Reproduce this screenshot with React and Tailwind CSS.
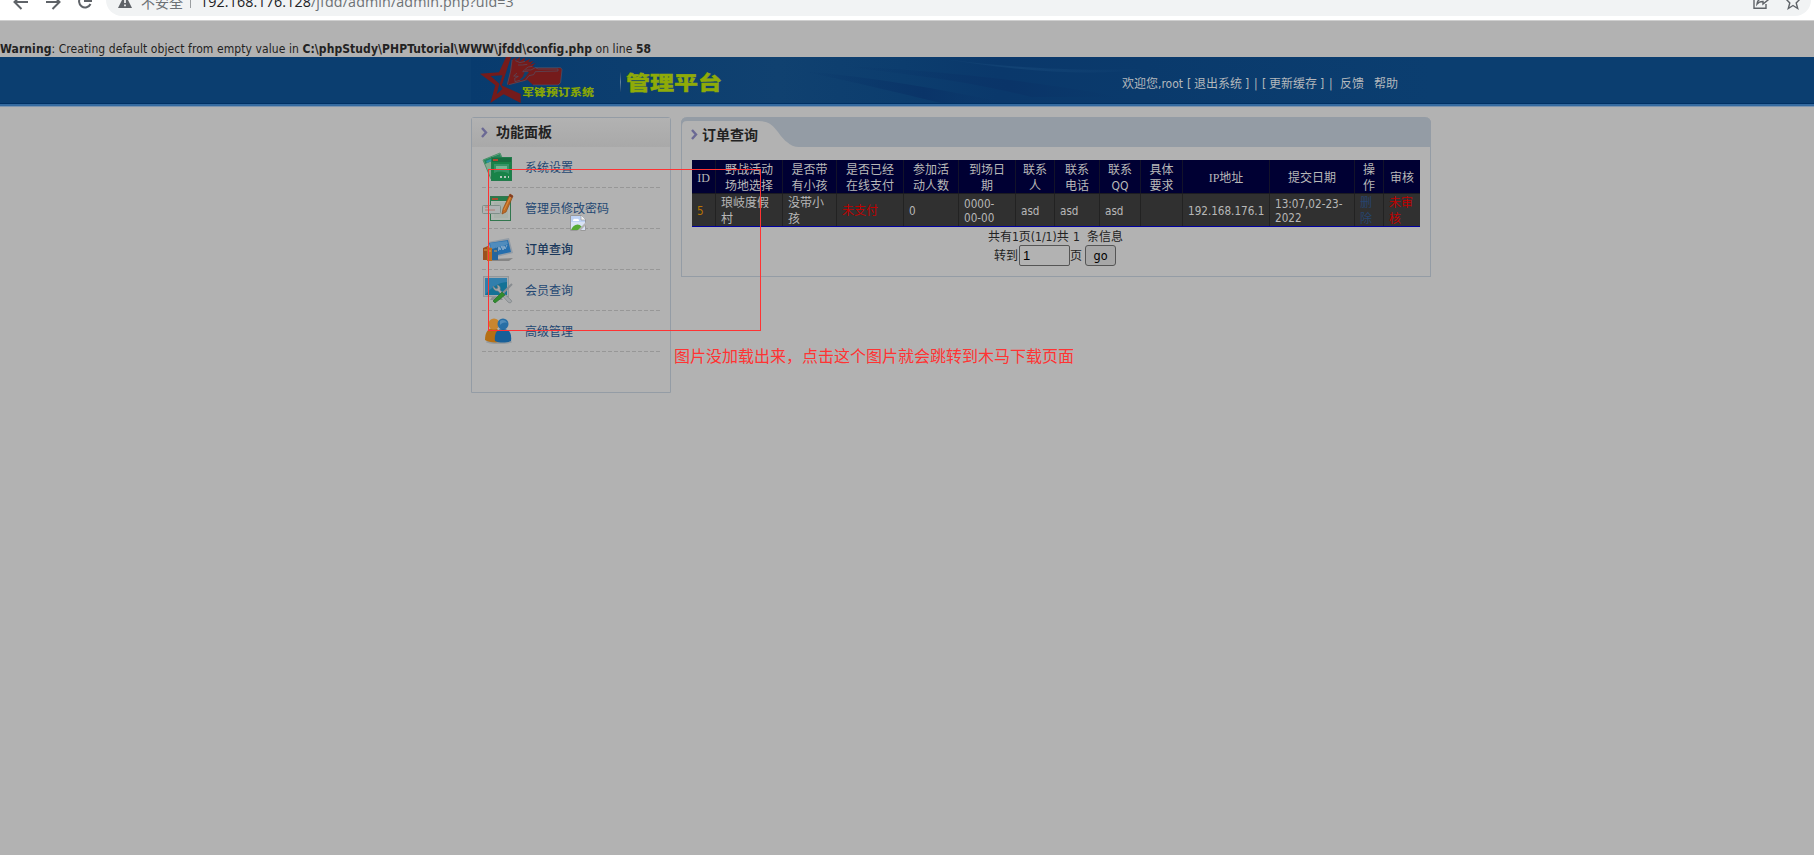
import React from "react";

const UI = "font-['DejaVu_Sans_Condensed','DejaVu_Sans','Noto_Sans_CJK_SC',sans-serif] font-stretch-condensed";
const CJK = "font-['Noto_Sans_CJK_SC',sans-serif]";

function BrowserBar() {
  return (
    <div className="h-[21px] bg-white border-b border-[#cfcfcf] flex items-start overflow-hidden">
      <svg className="block shrink-0" width="106" height="20" viewBox="0 0 106 20" fill="none" stroke="#5f6368" strokeWidth="2">
        <path d="M28 2H15M21.5 -5L14.5 2L21.5 9M46 2H59M52.500 -5L59.500 2L52.500 9" />
        <path d="M90 -2A6 6 0 1 0 90.500 4M84 1H91V-6" />
      </svg>
      <div className="w-[1705px] h-4 bg-[#f1f3f4] rounded-b-[16px] flex items-start">
        <svg className="block shrink-0 ml-[12px]" width="14" height="9" viewBox="0 0 14 9">
          <path d="M7 -6L14 8H0Z" fill="#5f6368" />
          <path d="M6.200 0h1.600v3h-1.600zM6.200 4.500h1.600v1.700h-1.600z" fill="#fff" />
        </svg>
        <div className={`${CJK} ml-[9px] -mt-2 w-[42px] h-5 text-[14px] leading-5 whitespace-nowrap text-[#6d7175]`}>不安全</div>
        <div className="ml-[7px] w-px h-2 bg-[#9b9ea1]" />
        <div className="ml-[9px] -mt-2 h-5 flex-1 font-['Open_Sans',sans-serif] text-[14.3px] leading-5 tracking-[0.11px] whitespace-nowrap text-[#6d7175]">
          <span className="text-[#202124]">192.168.176.128</span>/jfdd/admin/admin.php?uid=3
        </div>
        <svg className="block shrink-0 mr-[10px]" width="48" height="12" viewBox="0 0 48 12" fill="none" stroke="#5f6368" strokeWidth="1.4">
          <path d="M4 -4H1V8.300H13V4M4 4C4.500 0 7 -1.500 10 -1.500V-4L15 0L10 4V1.500C7 1.500 5.500 2 4 4Z" />
          <path d="M40 -6L42 -1H47L43.200 3L44.700 8.500L40 5.500L35.300 8.500L36.800 3L33 -1H38Z" />
        </svg>
      </div>
    </div>
  );
}

function Logo() {
  return (
    <div className="relative w-[130px] h-[47px] shrink-0">
      <svg className="block" width="130" height="47" viewBox="0 6 390 141">
        <path fill="#751b1b" fillRule="evenodd" d="M93 6H108L83 84L80 91L137 117V144L86 118L46 144L61 91L15 56L72 52ZM82 61L47 63L73 86L65 118L82 102L74 88Z" />
        <path fill="#751b1b" d="M111 15L122 6L121 17L135 6L134 19L150 7L147 20L166 11L160 22L176 18L165 29L182 24L172 34L181 38H258L261 44L256 86L249 90H174L158 75L102 90L96 87L105 50Z" />
        <path fill="none" stroke="#496179" strokeWidth="1.6" strokeLinejoin="round" d="M97 89L107 48L111 15M121 17L135 23L150 19M129 30L143 30L157 28M102 89L151 76L162 62L176 59L181 50L249 48V42H190L181 38L168 45H148L143 50H158L146 66L134 76L120 80L119 70L130 64L116 63L126 54M172 34L160 36L151 42M174 90H249L257 82L261 44L257 38H181" />
        <path fill="#12406b" d="M149 51H162L151 67L141 76L134 74L143 65Z" />
      </svg>
      <div className={`${CJK} absolute left-[47px] top-[29px] flex h-3 items-center origin-center scale-y-[.86] text-[12px] leading-3 font-black whitespace-nowrap text-[#86a506]`}>军锋预订系统</div>
    </div>
  );
}

function Header() {
  return (
    <div className="relative h-[50px] bg-[#0b3e70] flex flex-col">
      <svg className="absolute left-[471px] top-0" width="960" height="46" viewBox="0 0 960 46" preserveAspectRatio="none">
        <defs>
          <linearGradient id="base">
            <stop offset="0" stopColor="#083b6e" />
            <stop offset=".32" stopColor="#104170" />
            <stop offset=".45" stopColor="#0c3d6e" />
            <stop offset=".55" stopColor="#0a386b" />
            <stop offset=".7" stopColor="#0a3a6c" />
            <stop offset="1" stopColor="#0b3e70" />
          </linearGradient>
          <linearGradient id="beam">
            <stop offset="0" stopColor="#0a3669" stopOpacity="0" />
            <stop offset=".6" stopColor="#0a3468" />
            <stop offset="1" stopColor="#0a3669" stopOpacity="0" />
          </linearGradient>
          <linearGradient id="light">
            <stop offset="0" stopColor="#1c5080" stopOpacity="0" />
            <stop offset=".4" stopColor="#17497a" stopOpacity=".6" />
            <stop offset="1" stopColor="#17497a" stopOpacity="0" />
          </linearGradient>
        </defs>
        <rect width="960" height="46" fill="url(#base)" />
        <path d="M330 14C400 20 470 32 535 46H470C420 34 370 22 330 14Z" fill="url(#beam)" />
        <path d="M370 9C440 12 540 20 650 40H560C490 22 430 17 370 9Z" fill="url(#beam)" />
        <path d="M460 0C520 9 590 15 680 12C610 20 540 13 460 0Z" fill="url(#light)" />
      </svg>
      <div className="relative h-[46px] flex items-start pl-[475px]">
        <Logo />
        <div className="mt-[15px] ml-[15px] w-px h-5 bg-linear-to-b from-[#12406b] via-[#6483a0] to-[#12406b]" />
        <div className={`${CJK} mt-[13px] ml-[5px] w-[96px] h-[24px] text-[24px] leading-[24px] font-black whitespace-nowrap text-[#8fab08] scale-y-[.8] [-webkit-text-stroke:0.5px_#8fab08]`}>管理平台</div>
        <nav className={`${UI} ml-[400px] mt-[18px] h-[18px] flex items-center text-[12px] leading-[18px] whitespace-nowrap text-[#b4b8bc]`}>
          <span className="w-[65px]">欢迎您,root</span>
          <span className="w-[7px]">[</span>
          <span className="w-[51px]">退出系统</span>
          <span className="w-[9px]">]</span>
          <span className="w-[8px]">|</span>
          <span className="w-[7px]">[</span>
          <span className="w-[51px]">更新缓存</span>
          <span className="w-[9px]">]</span>
          <span className="w-[11px]">|</span>
          <span className="w-[34px]">反馈</span>
          <span>帮助</span>
        </nav>
      </div>
      <div className="relative h-px bg-[#003063]" />
      <div className="relative h-[2px] bg-[#356a9f]" />
      <div className="relative h-px bg-[#7d95b0]" />
    </div>
  );
}

function SettingsIcon() {
  return (
    <svg width="32" height="32" viewBox="0 0 32 32">
      <path d="M1 8L18 1L26 19L9 27Z" fill="#85ab91" stroke="#4f916b" />
      <path d="M2 8L18 2L19 5L3 12Z" fill="#23885a" />
      <path d="M4 9l5-2 1 2-5 2z" fill="#2c91a4" />
      <rect x="9.500" y="5.500" width="20" height="23" fill="#188348" stroke="#237b4c" />
      <rect x="10" y="6" width="19" height="4" fill="#176d40" />
      <rect x="11" y="7" width="5" height="2" fill="#ad4b31" />
      <path d="M12 12H27V22C22 19 17 19 12 21Z" fill="#369467" />
      <rect x="14" y="14" width="11" height="3" fill="#77b692" />
      <path d="M18 24h2v2h-2zM22 24h2v2h-2zM26 24h1v2h-1z" fill="#b5c7bb" />
    </svg>
  );
}

function PasswordIcon() {
  return (
    <svg width="32" height="32" viewBox="0 0 32 32">
      <rect x="8.500" y="3.500" width="20" height="24" fill="#b0b7b1" stroke="#32764e" />
      <rect x="9" y="4" width="19" height="4" fill="#267c4b" />
      <rect x="10" y="5" width="6" height="2" fill="#a54e33" />
      <path d="M12 9h14v16H12z" fill="#a9b2aa" />
      <rect x=".5" y="12.500" width="18" height="8" rx="1" fill="#afb3b3" stroke="#7f8f89" />
      <path d="M3 14h4M3 17h10" stroke="#b17a71" />
      <path d="M28 1L31 3L24 19L20 21L21 16Z" fill="#be6c25" stroke="#914b18" strokeWidth=".7" />
      <path d="M29 3L22 17" stroke="#e08e3d" />
      <path d="M28 1l3 2-1 2-3-2z" fill="#803d25" />
    </svg>
  );
}

function OrderIcon() {
  return (
    <svg width="32" height="32" viewBox="0 0 32 32">
      <path d="M10 25L31 24L27 27H10Z" fill="#858585" />
      <path d="M6 8L27 4L31 19L10 24Z" fill="#929ca6" />
      <path d="M7 9L26 6L29 18L11 22Z" fill="#256ead" />
      <path d="M8 9L25 7L26 10C19 14 15 12 9 16Z" fill="#508cbd" />
      <path d="M12 14l1 3 2-4 1 4 1-4 1 3 2-4 1 4 1-4 1 3 2-4" fill="none" stroke="#9eb9cf" strokeWidth=".8" />
      <path d="M1 14L6 12V26H1Z" fill="#9b511d" />
      <path d="M5 13L10 14V27H5Z" fill="#ba7021" />
      <path d="M10 15L16 13V26H10Z" fill="#24659c" />
      <path d="M2 16h3M6 17h3M12 17h3" stroke="#d69c4e" />
    </svg>
  );
}

function MemberIcon() {
  return (
    <svg width="32" height="32" viewBox="0 0 32 32">
      <rect x="1.500" y="1.500" width="25" height="20" fill="#a4a9ac" stroke="#92979a" />
      <rect x="3" y="3" width="22" height="17" fill="#147296" />
      <path d="M3 3H25V7C15 8 10 12 3 20Z" fill="#317fac" />
      <path d="M10 22h9l2 3H8z" fill="#8b8f90" />
      <path d="M11 11C11 14 13 16 16 16L26 27C28 29 31 27 29 25L18 15C19 12 17 10 15 10L16 13L14 14Z" fill="#a2a6a9" stroke="#747a7d" strokeWidth=".6" />
      <path d="M30 9L19 20" stroke="#888c90" strokeWidth="2" />
      <path d="M20 17L23 20L13 28L11 26Z" fill="#318c2c" stroke="#24712d" strokeWidth=".7" />
    </svg>
  );
}

function ManageIcon() {
  return (
    <svg width="32" height="32" viewBox="0 0 32 32">
      <ellipse cx="17" cy="26" rx="13" ry="2" fill="#969ca0" />
      <path d="M3 24C3 16 6 12 12 12C17 12 18 17 18 26C12 27 6 26 3 24Z" fill="#b56f14" />
      <circle cx="12" cy="8" r="5.500" fill="#c9862f" />
      <path d="M13 25C12 17 15 13 21 13C27 13 30 17 29 25C25 27 17 27 13 25Z" fill="#175f98" />
      <circle cx="21" cy="8" r="5.500" fill="#276fa6" />
      <path d="M18 5C20 3 24 4 25 7C22 6 20 7 18 9Z" fill="#508cba" />
    </svg>
  );
}

const MENU = [
  { label: "系统设置", Icon: SettingsIcon },
  { label: "管理员修改密码", Icon: PasswordIcon },
  { label: "订单查询", Icon: OrderIcon, active: true },
  { label: "会员查询", Icon: MemberIcon },
  { label: "高级管理", Icon: ManageIcon },
];

function Chevron() {
  return (
    <svg className="block shrink-0" width="7" height="11" viewBox="0 0 7 11">
      <path d="M1 1L5 5.500L1 10" fill="none" stroke="#6b6994" strokeWidth="2.4" />
    </svg>
  );
}

function Sidebar() {
  return (
    <aside className="w-[200px] h-[276px] shrink-0 border border-[#949ca5] rounded-t-[3px]">
      <div className="h-[29px] pl-[9px] flex items-center bg-linear-to-b from-[#b2b2b2] to-[#a9a9a9]">
        <Chevron />
        <h2 className={`${CJK} ml-[8px] pb-[3px] text-[14px] leading-5 font-bold text-[#222]`}>功能面板</h2>
      </div>
      <ul className="px-[10px]">
        {MENU.map(({ label, Icon, active }) => (
          <li key={label} className="relative h-[41px] flex items-center">
            <Icon />
            <span className={`${CJK} ml-[11px] pb-px text-[12px] leading-4 ${active ? "font-medium text-[#19385b]" : "text-[#244873]"}`}>{label}</span>
            <svg className="absolute left-0 bottom-0" width="178" height="1">
              <path d="M0 .5H178" stroke="#979797" strokeDasharray="4 2" />
            </svg>
          </li>
        ))}
      </ul>
    </aside>
  );
}

function Red({ children }) {
  return <span className="text-[#c00000]">{children}</span>;
}

const COLUMNS = [
  { w: "w-[24px]", head: ["ID"], body: [<span className="text-[#b87300]">5</span>] },
  { w: "w-[67px]", head: ["野战活动", "场地选择"], body: ["琅岐度假", "村"], cjk: true },
  { w: "w-[54px]", head: ["是否带", "有小孩"], body: ["没带小", "孩"], cjk: true },
  { w: "w-[67px]", head: ["是否已经", "在线支付"], body: [<Red>未支付</Red>], cjk: true },
  { w: "w-[55px]", head: ["参加活", "动人数"], body: ["0"] },
  { w: "w-[57px]", head: ["到场日", "期"], body: ["0000-", "00-00"] },
  { w: "w-[39px]", head: ["联系", "人"], body: ["asd"] },
  { w: "w-[45px]", head: ["联系", "电话"], body: ["asd"] },
  { w: "w-[41px]", head: ["联系", "QQ"], body: ["asd"] },
  { w: "w-[42px]", head: ["具体", "要求"], body: [""] },
  { w: "w-[87px]", head: ["IP地址"], body: ["192.168.176.1"] },
  { w: "w-[85px]", head: ["提交日期"], body: ["13:07,02-23-", "2022"] },
  { w: "w-[29px]", head: ["操", "作"], body: [<span className="text-[#27446e]">删</span>, <span className="text-[#27446e]">除</span>], cjk: true },
  { w: "w-[36px]", head: ["审核"], body: [<Red>未审</Red>, <Red>核</Red>], cjk: true },
];

function OrderTable() {
  return (
    <div className="w-[728px] h-[67px] flex flex-col">
      <div className="h-[34px] flex bg-[#000033] border-b border-[#1c1c22]">
        {COLUMNS.map((c, i) => (
          <div key={i} className={`${c.w} shrink-0 pt-[2px] flex flex-col items-center justify-center border-r border-[#13132a] last:border-r-0 font-['Liberation_Serif','Noto_Sans_CJK_SC',sans-serif] text-[12px] leading-4 whitespace-nowrap text-[#b8b8b8]`}>
            {c.head.map((t, j) => (
              <span key={j} className={`block h-4 ${t === "QQ" ? "font-['DejaVu_Sans_Condensed']" : ""}`}>{t}</span>
            ))}
          </div>
        ))}
      </div>
      <div className="h-[33px] flex bg-[#303030] border-b border-[#0000a0]">
        {COLUMNS.map((c, i) => (
          <div key={i} className={`${c.w} ${UI} shrink-0 flex flex-col justify-center border-r border-[#222] last:border-r-0 whitespace-nowrap text-[#b8b8b8] ${c.cjk ? "pl-[5px] pt-px text-[12px] leading-4" : "pl-[5px] pt-[2px] text-[11.6px] leading-[14px]"}`}>
            {c.body.map((t, j) => (
              <span key={j} className="block">{t}</span>
            ))}
          </div>
        ))}
      </div>
    </div>
  );
}

function Pager() {
  return (
    <div className={`${UI} w-[728px] text-[12px] text-[#222]`}>
      <div className="pl-[296px] pt-px h-[18px] leading-[18px] whitespace-nowrap flex">
        <span className="w-[85px]">共有1页(1/1)共</span>
        <span className="w-[14px]">1</span>
        <span>条信息</span>
      </div>
      <div className="pl-[302px] h-[21px] flex items-center">
        <span className="w-[25px]">转到</span>
        <input readOnly value="1" className="w-[51px] h-[21px] border border-[#555] rounded-[2px] pl-[3px] text-[13px] bg-[#b2b2b2] text-black outline-none font-['Liberation_Sans',sans-serif]" />
        <span className="w-[15px]">页</span>
        <button className="w-[31px] h-[21px] border border-[#555] rounded-[3px] bg-[#a7a7a7] text-[12.5px] leading-[17px] text-black">go</button>
      </div>
    </div>
  );
}

function MainPanel() {
  return (
    <main className="ml-[10px] w-[750px] h-[160px] shrink-0 flex flex-col border border-t-0 border-[#949ca5] rounded-t-[6px]">
      <div className="-mx-px relative h-[30px] rounded-t-[6px] bg-[#949ca5]">
        <svg className="absolute left-0 top-0" width="750" height="30">
          <path d="M1 30V9Q1 4 6 4H78C94 4 96 17 106 25Q111 30 118 30H749V33H1Z" fill="#b2b2b2" />
        </svg>
        <div className="relative h-[30px] pl-[10px] pt-[5px] flex items-center">
          <Chevron />
          <h2 className={`${CJK} ml-[4px] pb-[2px] text-[14px] leading-5 font-bold text-[#222]`}>订单查询</h2>
        </div>
      </div>
      <div className="pt-[13px] pl-[10px]">
        <OrderTable />
        <Pager />
      </div>
    </main>
  );
}

function BrokenImage() {
  return (
    <svg className="absolute left-[570px] top-[215px]" width="16" height="16" viewBox="0 0 16 16">
      <path d="M.5 .5H11L15.500 5V15.500H.5Z" fill="#d8e2f5" stroke="#999" />
      <path d="M1 7H15V1H1Z" fill="#bed2f4" />
      <path d="M3 6a2 2 0 0 1 3-2 2 2 0 0 1 3 2Z" fill="#fff" />
      <path d="M1 15C3 10 8 7 12 12L9 15Z" fill="#55aa35" />
      <path d="M16 7L7 16H10L16 10Z" fill="#b2b2b2" />
      <path d="M11 0V5H16Z" fill="#f4f4f4" stroke="#8e8e8e" strokeWidth=".6" />
      <path d="M11.500 0H16V4.500Z" fill="#b2b2b2" />
    </svg>
  );
}

export default function App() {
  return (
    <div className="relative w-[1814px] h-[855px] overflow-hidden bg-[#b2b2b2]">
      <BrowserBar />
      <div className={`${UI} h-9 pt-[20px] text-[12px] leading-[16px] tracking-[0.08px] whitespace-nowrap text-[#222]`}>
        <b>Warning</b>: Creating default object from empty value in <b>C:\phpStudy\PHPTutorial\WWW\jfdd\config.php</b> on line <b>58</b>
      </div>
      <Header />
      <div className="flex items-start pt-[10px] pl-[471px]">
        <Sidebar />
        <MainPanel />
      </div>
      <div className="absolute left-[488px] top-[169px] w-[273px] h-[162px] border border-[#ff3333]" />
      <BrokenImage />
      <div className={`${CJK} absolute left-[674px] top-[343px] text-[16px] leading-6 whitespace-nowrap text-[#ff3333]`}>图片没加载出来，点击这个图片就会跳转到木马下载页面</div>
    </div>
  );
}
